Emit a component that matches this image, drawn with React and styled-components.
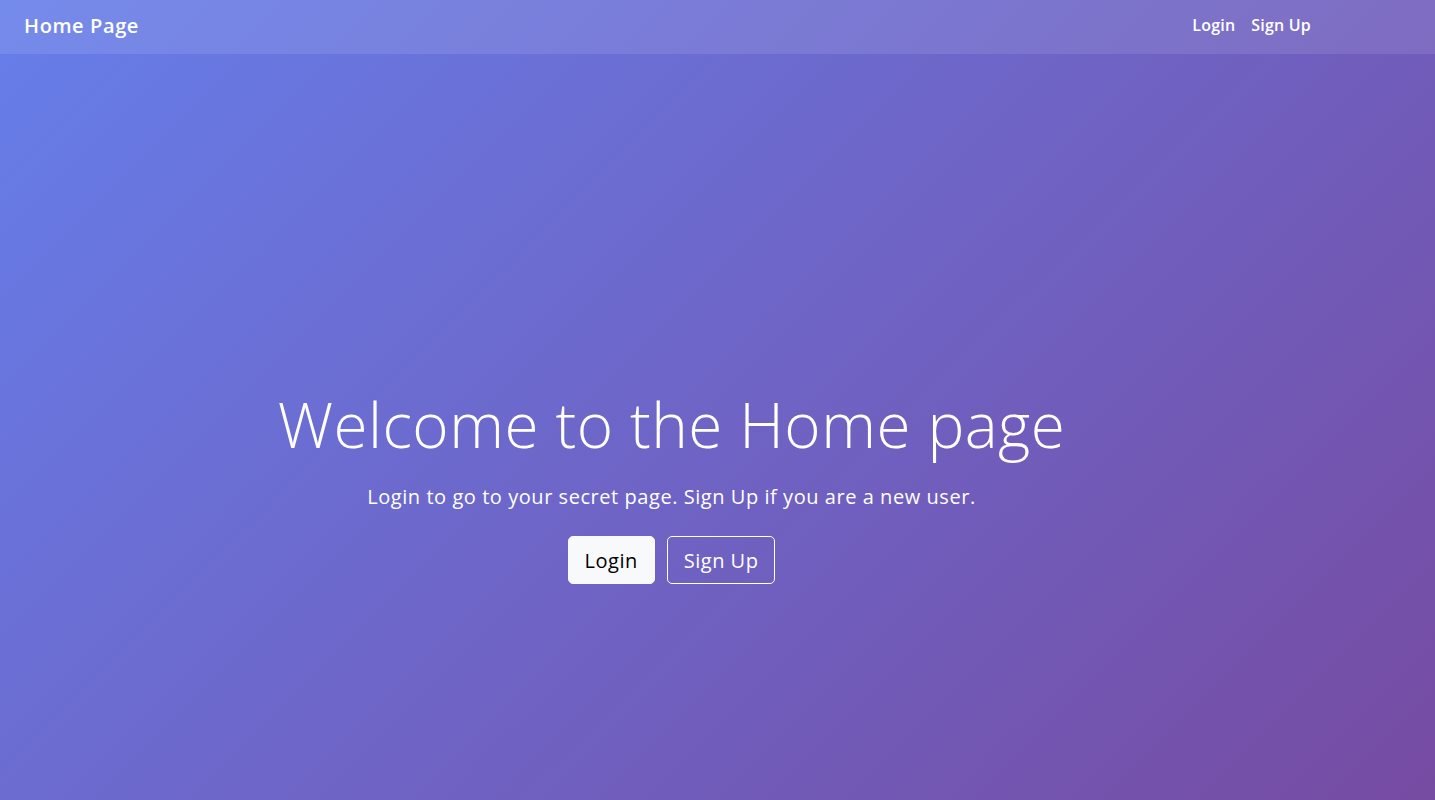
import React from "react";
import styled, { createGlobalStyle } from "styled-components";

const GlobalStyle = createGlobalStyle`
  * { box-sizing: border-box; }
  body {
    margin: 0;
    font-family: "Open Sans", "Noto Sans", sans-serif;
    color: #fff;
  }
`;

const Page = styled.div`
  min-height: 100vh;
  display: flex;
  flex-direction: column;
  background: linear-gradient(135deg, #667eea 0%, #764ba2 100%);
`;

const Navbar = styled.nav`
  height: 54px;
  display: flex;
  align-items: center;
  justify-content: space-between;
  padding: 0 124px 4px 24px;
  background: rgba(255, 255, 255, 0.1);
`;

const Brand = styled.a`
  font-size: 20px;
  font-weight: 600;
  letter-spacing: 0.6px;
  color: #fff;
  text-decoration: none;
`;

const NavLinks = styled.div`
  display: flex;
  gap: 16px;
`;

const NavLink = styled.a`
  font-size: 16px;
  font-weight: 600;
  letter-spacing: 0.2px;
  color: #fff;
  text-decoration: none;
`;

const Hero = styled.main`
  flex: 1;
  display: flex;
  flex-direction: column;
  align-items: center;
  padding: 333px 92px 0 0;
`;

const Title = styled.h1`
  margin: 0 0 21px;
  font-size: 62px;
  font-weight: 300;
  line-height: 1.2;
  letter-spacing: 0.45px;
`;

const Lead = styled.p`
  margin: 0 0 24px;
  font-size: 20px;
  font-weight: 400;
  line-height: 1.5;
  letter-spacing: 0.55px;
`;

const Actions = styled.div`
  display: flex;
  gap: 12px;
`;

const Button = styled.button`
  height: 48px;
  padding: 0 16px;
  font-family: inherit;
  font-size: 20px;
  letter-spacing: 0.5px;
  border-radius: 5px;
  cursor: pointer;
  border: 1px solid ${(p) => (p.$outline ? "#fff" : "#f8f9fa")};
  background: ${(p) => (p.$outline ? "transparent" : "#f8f9fa")};
  color: ${(p) => (p.$outline ? "#fff" : "#000")};
`;

const App = () => {
  return (
    <>
      <GlobalStyle />
      <Page>
        <Navbar>
          <Brand href="#">Home Page</Brand>
          <NavLinks>
            <NavLink href="#">Login</NavLink>
            <NavLink href="#">Sign Up</NavLink>
          </NavLinks>
        </Navbar>
        <Hero>
          <Title>Welcome to the Home page</Title>
          <Lead>Login to go to your secret page. Sign Up if you are a new user.</Lead>
          <Actions>
            <Button>Login</Button>
            <Button $outline>Sign Up</Button>
          </Actions>
        </Hero>
      </Page>
    </>
  );
};

export default App;
